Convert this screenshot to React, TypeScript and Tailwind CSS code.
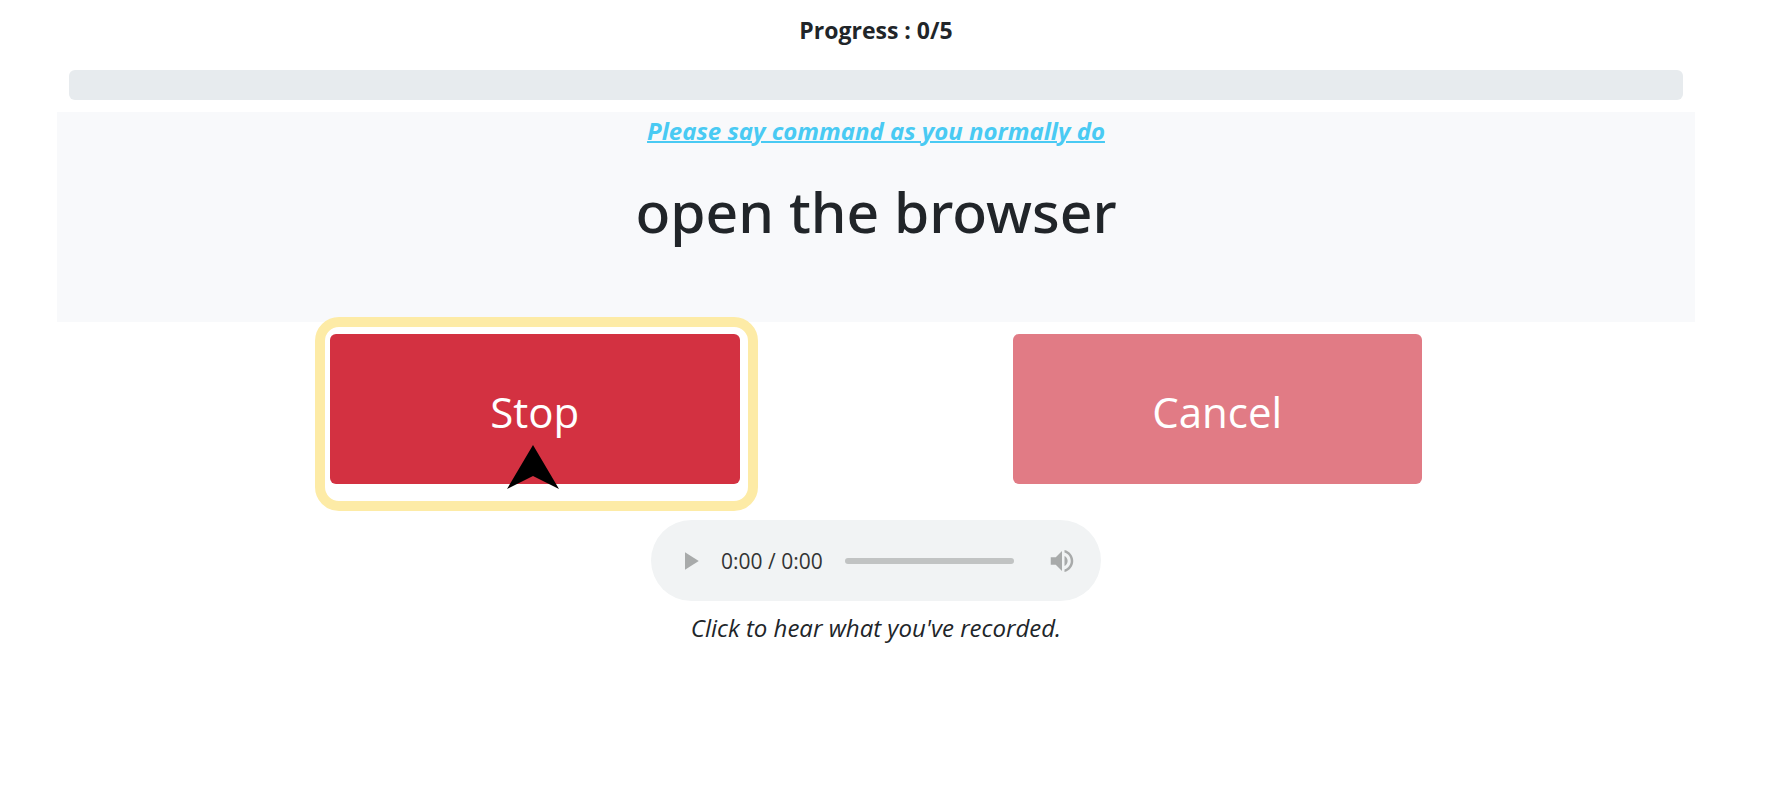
function PlayIcon() {
  return (
    <svg viewBox="0 0 24 24" className="size-[30px]" fill="currentColor" aria-hidden="true">
      <path d="M8 5v14l11-7z" />
    </svg>
  );
}

function VolumeIcon() {
  return (
    <svg viewBox="0 0 24 24" className="size-[30px]" fill="currentColor" aria-hidden="true">
      <path d="M3 9v6h4l5 5V4L7 9H3zm13.5 3c0-1.77-1.02-3.29-2.5-4.03v8.05c1.48-.73 2.5-2.25 2.5-4.02zM14 3.23v2.06c2.89.86 5 3.54 5 6.71s-2.11 5.85-5 6.71v2.06c4.01-.91 7-4.49 7-8.77s-2.99-7.86-7-8.77z" />
    </svg>
  );
}

function Pointer() {
  return (
    <svg viewBox="0 0 52 44" className="absolute top-[111px] left-1/2 h-11 w-[52px] -translate-x-7" aria-hidden="true">
      <path d="M26 0L52 44L26 31L0 44Z" fill="#000" />
    </svg>
  );
}

function AudioPlayer() {
  return (
    <div className="flex h-[81px] w-[450px] items-center rounded-full bg-[#f1f3f4] px-6 text-[#a8aaaa]">
      <button type="button" aria-label="Play">
        <PlayIcon />
      </button>
      <span className="ml-4 w-[124px] text-[21px] text-[#333]">0:00 / 0:00</span>
      <input
        type="range"
        min={0}
        max={100}
        defaultValue={0}
        aria-label="Seek"
        className="h-[6px] min-w-0 flex-1 appearance-none rounded-full bg-[#c1c3c3] [&::-webkit-slider-thumb]:size-0 [&::-webkit-slider-thumb]:appearance-none"
      />
      <button type="button" aria-label="Mute" className="ml-[33px]">
        <VolumeIcon />
      </button>
    </div>
  );
}

export default function App() {
  return (
    <main className="bg-white pr-[78px] pl-[57px] font-['Open_Sans','Noto_Sans',sans-serif] text-2xl text-[#212529]">
      <p className="pt-3 text-center text-[23px] leading-9 font-bold">Progress : 0/5</p>
      <div className="px-3 pt-[22px] pb-3">
        <div
          role="progressbar"
          aria-label="Progress"
          aria-valuemin={0}
          aria-valuemax={5}
          aria-valuenow={0}
          className="h-[30px] rounded-md bg-[#e7ebee]"
        />
      </div>
      <section className="h-[210px] bg-[#f8f9fb] pt-px text-center">
        <p className="text-2xl leading-9 font-bold text-[#49caf3] italic underline decoration-2">
          Please say command as you normally do
        </p>
        <h1 className="pt-6 font-['Noto_Sans',sans-serif] text-[57px] leading-[76px] font-medium">open the browser</h1>
      </section>
      <div className="grid grid-cols-12 pt-3 text-[42px] text-white">
        <div className="relative col-span-3 col-start-3">
          <button type="button" className="h-[150px] w-full rounded-md bg-[#d33141] pt-[6px]">
            Stop
          </button>
          <div className="pointer-events-none absolute -top-[17px] -right-[18px] -bottom-[27px] -left-[15px] rounded-3xl border-10 border-[#fdeba6]" />
          <Pointer />
        </div>
        <button type="button" className="col-span-3 col-start-8 h-[150px] rounded-md bg-[#e17b85] pt-[6px]">
          Cancel
        </button>
      </div>
      <div className="flex flex-col items-center pt-9">
        <AudioPlayer />
        <p className="pt-[9px] text-2xl leading-9 italic">Click to hear what you've recorded.</p>
      </div>
    </main>
  );
}
